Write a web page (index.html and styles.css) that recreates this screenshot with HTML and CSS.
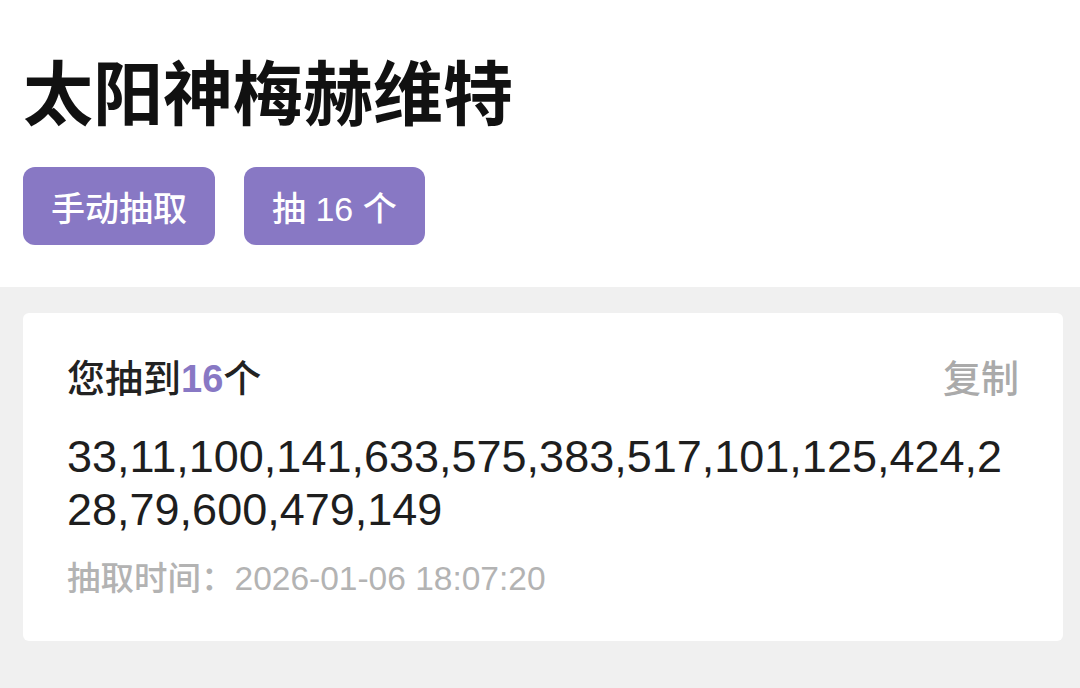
FILE: index.html
```html
<!DOCTYPE html>
<html lang="zh-CN">
<head>
<meta charset="utf-8">
<title>太阳神梅赫维特</title>
<link rel="stylesheet" href="styles.css">
</head>
<body>
  <header class="top">
    <h1 class="title">太阳神梅赫维特</h1>
    <div class="actions">
      <button class="btn" type="button">手动抽取</button>
      <button class="btn" type="button">抽 16 个</button>
    </div>
  </header>
  <main class="results">
    <section class="card">
      <div class="card-head">
        <div class="summary">您抽到<span class="count">16</span>个</div>
        <div class="copy">复制</div>
      </div>
      <div class="numbers">33,11,100,141,633,575,383,517,101,125,424,228,79,600,479,149</div>
      <div class="time">抽取时间：2026-01-06 18:07:20</div>
    </section>
  </main>
</body>
</html>
```

FILE: styles.css
```css
html, body {
  margin: 0;
  padding: 0;
  background: #ffffff;
}

body {
  font-family: "Liberation Sans", "Noto Sans CJK SC", sans-serif;
  color: #1a1a1a;
  height: 688px;
  overflow: hidden;
  display: flex;
  flex-direction: column;
}

.top {
  padding: 54px 23px 42px;
}

.title {
  margin: 0;
  font-size: 70px;
  line-height: 84px;
  font-weight: 700;
  color: #111111;
}

.actions {
  display: flex;
  gap: 29px;
  margin-top: 29px;
}

.btn {
  display: inline-flex;
  align-items: center;
  height: 78px;
  padding: 0 28px;
  border: none;
  border-radius: 12px;
  background: #8878c4;
  color: #ffffff;
  font-family: "Liberation Sans", "Noto Sans CJK SC", sans-serif;
  font-size: 34px;
  font-weight: 500;
}

.results {
  flex: 1;
  background: #f0f0f0;
  padding: 26px 17px 0 23px;
}

.card {
  background: #ffffff;
  border-radius: 6px;
  padding: 41px 44px 40px;
}

.card-head {
  display: flex;
  justify-content: space-between;
  align-items: center;
  font-size: 38px;
  line-height: 50px;
  font-weight: 500;
}

.summary {
  color: #222222;
}

.count {
  color: #8878c4;
  font-weight: 700;
}

.copy {
  color: #aaaaaa;
}

.numbers {
  margin-top: 26px;
  font-size: 45px;
  line-height: 53px;
  color: #1e1e1e;
  word-break: break-all;
}

.time {
  margin-top: 21px;
  font-size: 33.5px;
  line-height: 44px;
  color: #b3b3b3;
  font-weight: 500;
}
```
